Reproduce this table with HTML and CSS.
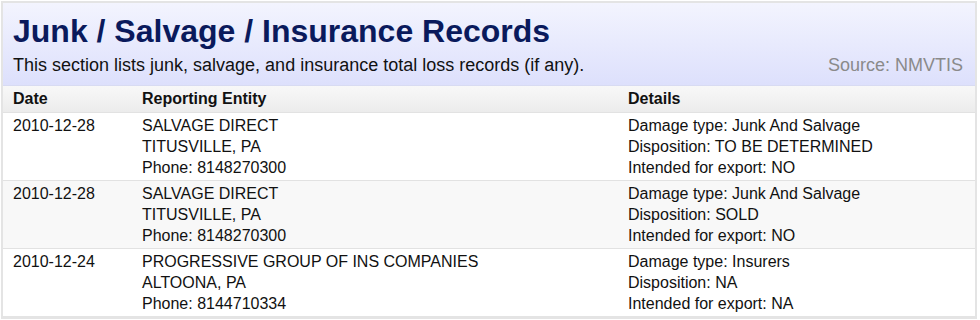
FILE: index.html
```html
<!DOCTYPE html>
<html>
<head>
<meta charset="utf-8">
<link rel="stylesheet" href="styles.css">
</head>
<body>
<div class="panel">
  <div class="head">
    <h1 class="title">Junk / Salvage / Insurance Records</h1>
    <div class="sub">
      <span class="desc">This section lists junk, salvage, and insurance total loss records (if any).</span>
      <span class="source">Source: NMVTIS</span>
    </div>
  </div>
  <table class="records">
    <thead>
      <tr><th class="c-date">Date</th><th class="c-ent">Reporting Entity</th><th class="c-det">Details</th></tr>
    </thead>
    <tbody>
      <tr>
        <td>2010-12-28</td>
        <td>SALVAGE DIRECT<br>TITUSVILLE, PA<br>Phone: 8148270300</td>
        <td>Damage type: Junk And Salvage<br>Disposition: TO BE DETERMINED<br>Intended for export: NO</td>
      </tr>
      <tr class="alt">
        <td>2010-12-28</td>
        <td>SALVAGE DIRECT<br>TITUSVILLE, PA<br>Phone: 8148270300</td>
        <td>Damage type: Junk And Salvage<br>Disposition: SOLD<br>Intended for export: NO</td>
      </tr>
      <tr>
        <td>2010-12-24</td>
        <td>PROGRESSIVE GROUP OF INS COMPANIES<br>ALTOONA, PA<br>Phone: 8144710334</td>
        <td>Damage type: Insurers<br>Disposition: NA<br>Intended for export: NA</td>
      </tr>
    </tbody>
  </table>
</div>
</body>
</html>
```
FILE: styles.css
```css
html, body { margin: 0; padding: 0; background: #fff; }
body { font-family: "Liberation Sans", Arial, sans-serif; color: #111; }
.panel {
  margin: 1px 3px 0 1px;
  border: 2px solid #e4e4e4;
  border-bottom-width: 3px;
  width: 972px;
}
.head {
  background: linear-gradient(#f3f4fe, #dde0fc);
  padding: 10px 12px 9px 10px;
  border-bottom: 1px solid #d8dbf2;
}
.title {
  margin: 0;
  font-size: 32px;
  font-weight: bold;
  color: #0a1a5c;
  line-height: 36px;
}
.sub {
  display: flex;
  justify-content: space-between;
  font-size: 18px;
  line-height: 22px;
  margin-top: 5px;
  color: #111;
}
.source { color: #8a8a8a; }
.records { width: 100%; border-collapse: separate; border-spacing: 0; font-size: 16px; }
.records th {
  text-align: left;
  font-weight: bold;
  background: linear-gradient(#f8f8f8, #ececec);
  padding: 3px 10px 3px 10px;
  line-height: 20px;
}
.records td {
  vertical-align: top;
  padding: 2px 10px 2px 10px;
  line-height: 21px;
  border-top: 1px solid #e2e2e2;
}
.records tr.alt td { background: #f8f8f8; }
.c-date { width: 109px; }
.c-ent { width: 466px; }
```
